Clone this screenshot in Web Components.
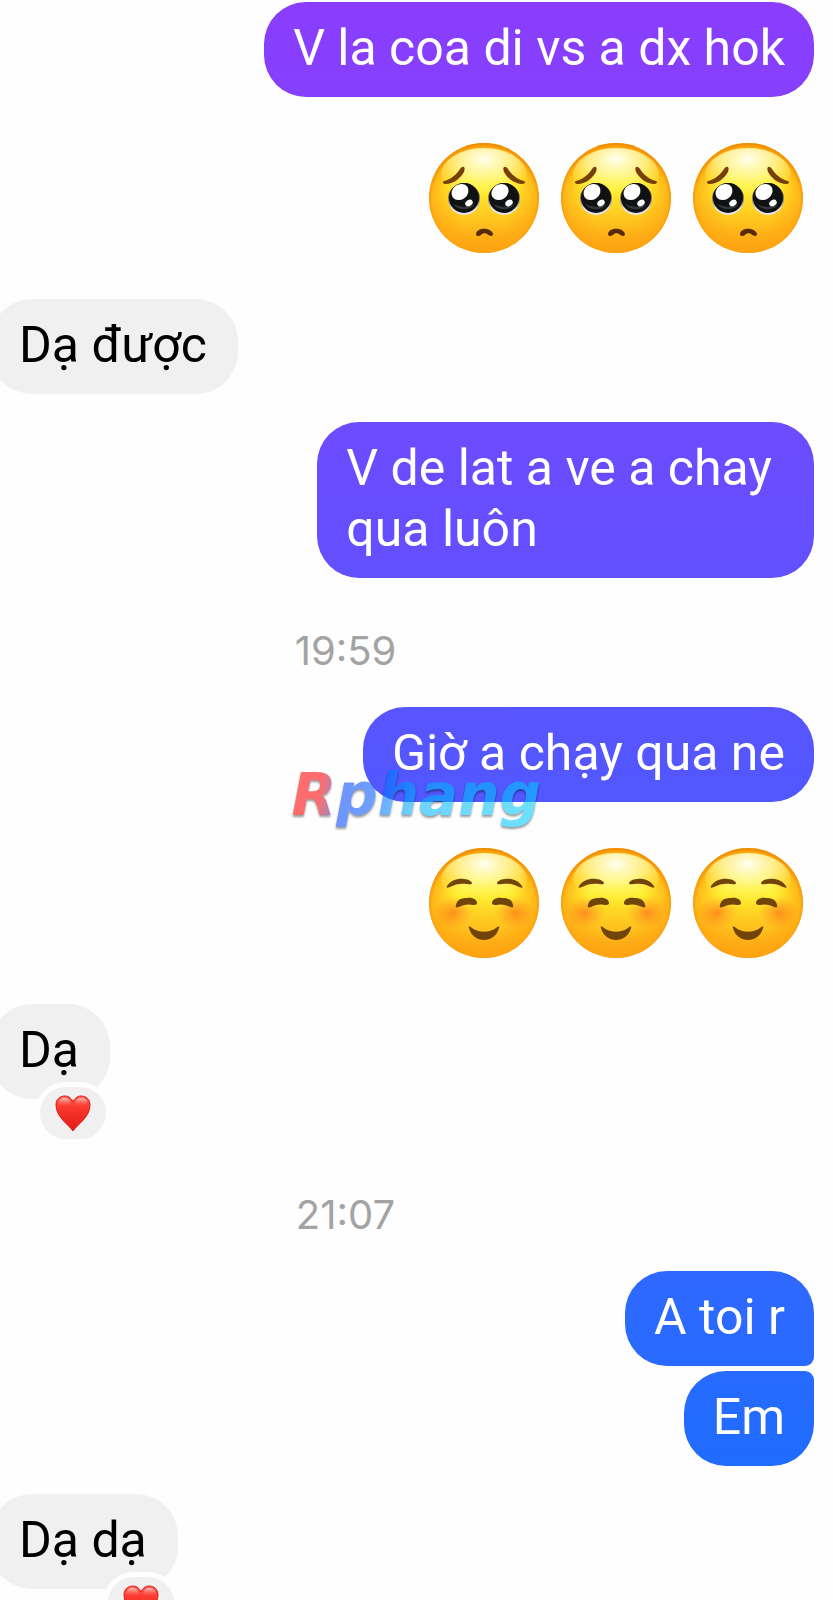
<!DOCTYPE html>
<html lang="vi">
<head>
<meta charset="utf-8">
<meta name="viewport" content="width=device-width, initial-scale=1">
<title>Chat</title>
<style>
    body {
        margin: 0;
        background: #fefefe;
        font-family: Roboto, "Liberation Sans", sans-serif;
    }
</style>
</head>
<body>
<chat-thread>
    <chat-message side="out">V la coa di vs a dx hok</chat-message>
    <emoji-row>
        <emoji-face kind="pleading"></emoji-face>
        <emoji-face kind="pleading"></emoji-face>
        <emoji-face kind="pleading"></emoji-face>
    </emoji-row>
    <chat-message side="in">Dạ được</chat-message>
    <chat-message side="out" multiline>V de lat a ve a chay<br>qua luôn</chat-message>
    <chat-time>19:59</chat-time>
    <chat-message side="out">Giờ a chạy qua ne<brand-mark slot="overlay">Rphang</brand-mark></chat-message>
    <emoji-row>
        <emoji-face kind="smiling"></emoji-face>
        <emoji-face kind="smiling"></emoji-face>
        <emoji-face kind="smiling"></emoji-face>
    </emoji-row>
    <chat-message side="in" reacted>Dạ<heart-reaction slot="reaction"></heart-reaction></chat-message>
    <chat-time>21:07</chat-time>
    <chat-message side="out" group="first">A toi r</chat-message>
    <chat-message side="out" group="last">Em</chat-message>
    <chat-message side="in" reacted>Dạ dạ<heart-reaction slot="reaction"></heart-reaction></chat-message>
</chat-thread>

<template id="thread-template">
    <style>
        :host {
            display: flex;
            flex-direction: column;
            gap: 28px;
            box-sizing: border-box;
            min-height: 100vh;
            padding-top: 2px;
            overflow: hidden;
        }
    </style>
    <slot></slot>
</template>

<template id="message-template">
    <style>
        :host {
            display: flex;
            position: relative;
            font-size: 50px;
            line-height: 61px;
        }

        :host([side=out]) {
            justify-content: flex-end;
            padding-right: 19px;
            padding-left: 100px;
        }

        :host([side=in]) {
            margin-left: -10px;
            padding-right: 100px;
        }

        :host([reacted]) {
            margin-bottom: 43px;
        }

        :host([reacted]:last-of-type) {
            margin-bottom: 0;
        }

        :host([group=last]) {
            margin-top: -23px;
        }

        .bubble {
            position: relative;
            padding: 16px 29px 18px;
            border-radius: 42px;
        }

        :host([multiline]) .bubble {
            padding-right: 42px;
        }

        :host([side=in]) .bubble {
            padding-right: 31px;
            color: #000;
            background: #f0f0f0;
        }

        /* every outgoing bubble is a window onto the same gradient */
        :host([side=out]) .bubble {
            color: #fff;
            background: linear-gradient(#8b3dfd, #684dff 31%, #5556ff 47%, #2c69ff 82%, #1f6cff 92%) fixed;
        }

        :host([group=first]) .bubble {
            border-bottom-right-radius: 9px;
        }

        :host([group=last]) .bubble {
            border-top-right-radius: 9px;
        }
    </style>
    <div class="bubble">
        <slot></slot>
        <slot name="reaction"></slot>
    </div>
    <slot name="overlay"></slot>
</template>

<template id="time-template">
    <style>
        :host {
            display: block;
            padding: 21px 142px 4px 0;
            color: #a3a3a3;
            font-family: Inter, "Liberation Sans", sans-serif;
            font-size: 40px;
            line-height: 48px;
            text-align: center;
        }
    </style>
    <time><slot></slot></time>
</template>

<template id="emoji-row-template">
    <style>
        :host {
            display: flex;
            justify-content: flex-end;
            gap: 22px;
            padding: 18px 30px 18px 0;
        }
    </style>
    <slot></slot>
</template>

<template id="pleading-template">
    <svg viewBox="0 0 110 110" role="img" aria-label="pleading face">
        <defs>
            <linearGradient id="skin" x1="0" y1="0" x2="0" y2="1">
                <stop offset="0" stop-color="#ffd500"/>
                <stop offset=".4" stop-color="#fff02f"/>
                <stop offset=".62" stop-color="#ffcf22"/>
                <stop offset="1" stop-color="#fd9f14"/>
            </linearGradient>
            <radialGradient id="rim" cx=".5" cy=".52" r=".52">
                <stop offset=".5" stop-color="#ffa510" stop-opacity="0"/>
                <stop offset=".9" stop-color="#ffa510" stop-opacity=".7"/>
                <stop offset="1" stop-color="#ee8208"/>
            </radialGradient>
            <radialGradient id="shine" cx=".5" cy=".2" r=".75">
                <stop offset="0" stop-color="#fffff0"/>
                <stop offset=".45" stop-color="#fffca8" stop-opacity=".75"/>
                <stop offset="1" stop-color="#fff440" stop-opacity="0"/>
            </radialGradient>
            <linearGradient id="ring" x1="0" y1="0" x2="0" y2="1">
                <stop offset=".3" stop-color="#4a3a1c"/>
                <stop offset=".8" stop-color="#e6e3ea"/>
            </linearGradient>
        </defs>
        <circle cx="55" cy="55" r="55" fill="url(#skin)"/>
        <circle cx="55" cy="55" r="55" fill="url(#rim)"/>
        <ellipse cx="55" cy="32" rx="43" ry="27" fill="url(#shine)"/>
        <g fill="#77400b">
            <path d="M15 38C22 36 27 32 31 26C34 22 37 24 35 29C31 36 24 41 17 41C14 41 13 39 15 38Z"/>
            <path d="M95 38C88 36 83 32 79 26C76 22 73 24 75 29C79 36 86 41 93 41C96 41 97 39 95 38Z"/>
        </g>
        <g id="eye">
            <circle cx="35" cy="56" r="16" fill="url(#ring)"/>
            <circle cx="35" cy="55" r="15" fill="#101112"/>
            <path d="M24 61A14 14 0 0 0 46 61Q36 67 24 61Z" fill="#35383a"/>
            <ellipse cx="31" cy="49" rx="9" ry="7.5" fill="#fff" transform="rotate(-35 31 49)"/>
            <ellipse cx="40" cy="60" rx="4" ry="3" fill="#fff" transform="rotate(-35 40 60)"/>
        </g>
        <use href="#eye" x="40"/>
        <path d="M47 91C48 84 62 84 64 91C64 94 60 93 58 91C57 90 53 90 52 92C50 94 47 93 47 91Z" fill="#582b05"/>
    </svg>
</template>

<template id="smiling-template">
    <svg viewBox="0 0 110 110" role="img" aria-label="smiling face">
        <defs>
            <linearGradient id="skin" x1="0" y1="0" x2="0" y2="1">
                <stop offset="0" stop-color="#ffd500"/>
                <stop offset=".4" stop-color="#fff02f"/>
                <stop offset=".62" stop-color="#ffcf22"/>
                <stop offset="1" stop-color="#fd9f14"/>
            </linearGradient>
            <radialGradient id="rim" cx=".5" cy=".52" r=".52">
                <stop offset=".5" stop-color="#ffa510" stop-opacity="0"/>
                <stop offset=".9" stop-color="#ffa510" stop-opacity=".7"/>
                <stop offset="1" stop-color="#ee8208"/>
            </radialGradient>
            <radialGradient id="shine" cx=".5" cy=".2" r=".75">
                <stop offset="0" stop-color="#fffff0"/>
                <stop offset=".45" stop-color="#fffca8" stop-opacity=".75"/>
                <stop offset="1" stop-color="#fff440" stop-opacity="0"/>
            </radialGradient>
            <radialGradient id="blush">
                <stop offset="0" stop-color="#ff7a1c" stop-opacity=".75"/>
                <stop offset="1" stop-color="#ff8a1c" stop-opacity="0"/>
            </radialGradient>
        </defs>
        <circle cx="55" cy="55" r="55" fill="url(#skin)"/>
        <circle cx="55" cy="55" r="55" fill="url(#rim)"/>
        <ellipse cx="55" cy="32" rx="43" ry="27" fill="url(#shine)"/>
        <ellipse cx="24" cy="65" rx="20" ry="16" fill="url(#blush)"/>
        <ellipse cx="86" cy="65" rx="20" ry="16" fill="url(#blush)"/>
        <g fill="#714509">
            <g id="half">
                <path d="M18 38C22 32 29 30 35 31C40 31 43 34 43 35C43 37 40 36 38 36C32 35 26 36 21 39C18 40 17 40 18 38Z"/>
                <path d="M27 57C28 51 33 50 38 50C44 49 48 52 48 55C48 57 45 57 43 57C38 56 34 57 30 59C27 60 26 59 27 57Z"/>
            </g>
            <use href="#half" transform="matrix(-1 0 0 1 111 0)"/>
            <path d="M40 80C39 78 41 78 43 80C50 85 60 85 67 80C69 78 71 78 70 80C66 96 44 96 40 80Z"/>
        </g>
    </svg>
</template>

<template id="heart-template">
    <style>
        :host {
            display: flex;
            align-items: center;
            justify-content: center;
            position: absolute;
            right: 4px;
            bottom: -40px;
            width: 66px;
            height: 52px;
            border-radius: 31px;
            border: 5px solid #fefefe;
            margin: 0 -5px -5px 0;
            background: #f0f0f0;
        }

        svg {
            width: 36px;
            height: 36px;
        }
    </style>
    <svg viewBox="0 0 36 36" role="img" aria-label="red heart">
        <defs>
            <linearGradient id="red" x1="0" y1="0" x2="0" y2="1">
                <stop offset="0" stop-color="#ff5a4c"/>
                <stop offset=".3" stop-color="#fb3a30"/>
                <stop offset="1" stop-color="#e01a14"/>
            </linearGradient>
            <linearGradient id="gloss" x1="0" y1="0" x2="0" y2="1">
                <stop offset="0" stop-color="#ffd5cc" stop-opacity=".85"/>
                <stop offset="1" stop-color="#ff6a5c" stop-opacity="0"/>
            </linearGradient>
        </defs>
        <path d="M18 36C13 29 1 22 1 10C1 4 5 1 10 1C14 1 17 4 18 7C19 4 22 1 26 1C31 1 35 4 35 10C35 22 23 29 18 36Z" fill="url(#red)" stroke="#dc241c"/>
        <path d="M3 9C4 1 14 1 16 8C13 12 6 12 3 9ZM20 8C22 1 32 1 33 9C30 12 23 12 20 8Z" fill="url(#gloss)"/>
    </svg>
</template>

<template id="brand-template">
    <style>
        :host {
            display: block;
            position: absolute;
            top: 51px;
            left: 35%;
            opacity: .57;
            filter: drop-shadow(0 2px 1px rgba(0, 0, 0, .7));
            font: italic bold 58px/74px "DejaVu Sans", sans-serif;
        }

        span {
            color: transparent;
            background: linear-gradient(100deg, #f00 13%, #0048ff 22%, #05f 32%, #00b4ff 50%, #00ceff);
            -webkit-background-clip: text;
            background-clip: text;
        }
    </style>
    <span><slot></slot></span>
</template>

<script>
function stamp (host, id) {
    const root = host.attachShadow({ mode: 'open' });
    root.appendChild(document.getElementById(id).content.cloneNode(true));
    return root;
}

class ChatThread extends HTMLElement {
    constructor () {
        super();
        stamp(this, 'thread-template');
    }
}

class ChatMessage extends HTMLElement {
    constructor () {
        super();
        stamp(this, 'message-template');
    }
}

class ChatTime extends HTMLElement {
    constructor () {
        super();
        stamp(this, 'time-template');
    }
}

class EmojiRow extends HTMLElement {
    constructor () {
        super();
        stamp(this, 'emoji-row-template');
    }
}

class EmojiFace extends HTMLElement {
    connectedCallback () {
        if (this.shadowRoot) return;
        const root = stamp(this, this.getAttribute('kind') + '-template');
        const style = document.createElement('style');
        style.textContent = ':host { display: block; } svg { display: block; width: 110px; height: 110px; }';
        root.prepend(style);
    }
}

class HeartReaction extends HTMLElement {
    constructor () {
        super();
        stamp(this, 'heart-template');
    }
}

class BrandMark extends HTMLElement {
    constructor () {
        super();
        stamp(this, 'brand-template');
    }
}

customElements.define('chat-thread', ChatThread);
customElements.define('chat-message', ChatMessage);
customElements.define('chat-time', ChatTime);
customElements.define('emoji-row', EmojiRow);
customElements.define('emoji-face', EmojiFace);
customElements.define('heart-reaction', HeartReaction);
customElements.define('brand-mark', BrandMark);
</script>
</body>
</html>
